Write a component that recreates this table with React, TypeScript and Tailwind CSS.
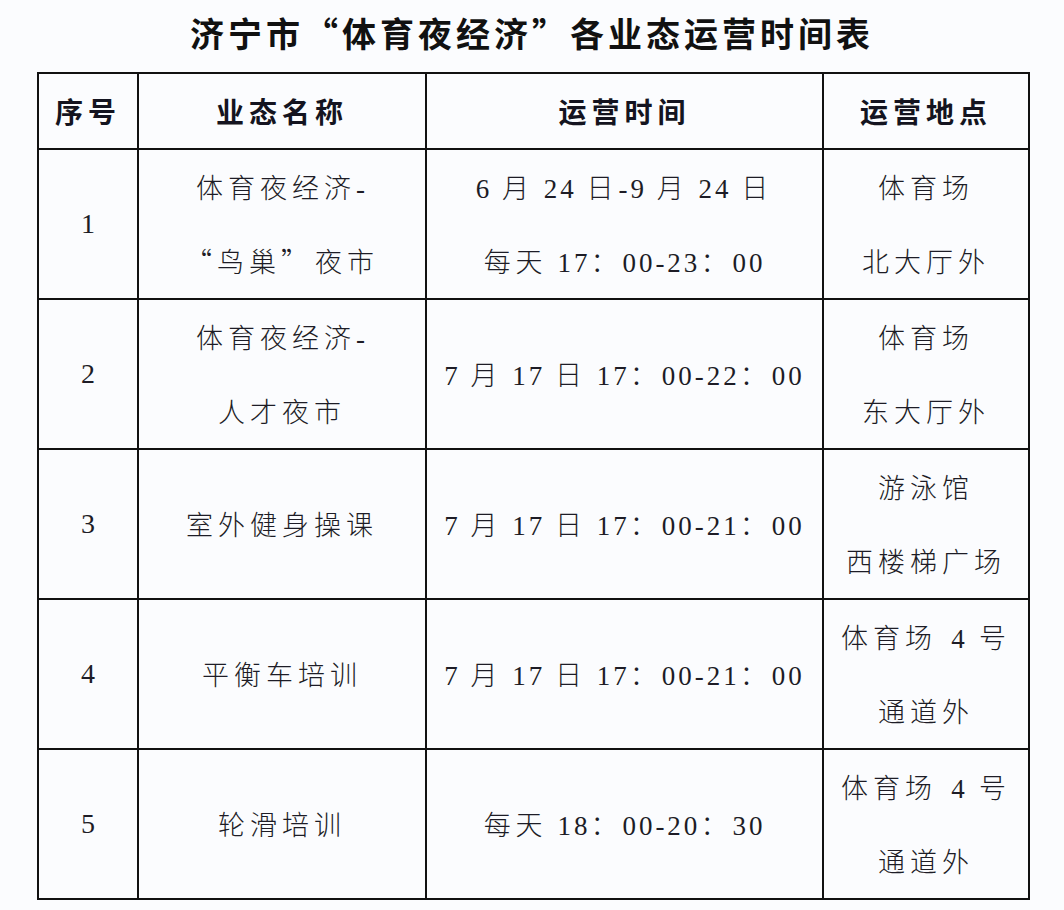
import React from 'react';

type Row = {
  no: string;
  name: string[];
  time: string[];
  place: string[];
};

const rows: Row[] = [
  { no: '1', name: ['体育夜经济-', '“鸟巢”夜市'], time: ['6 月 24 日-9 月 24 日', '每天 17：00-23：00'], place: ['体育场', '北大厅外'] },
  { no: '2', name: ['体育夜经济-', '人才夜市'], time: ['7 月 17 日 17：00-22：00'], place: ['体育场', '东大厅外'] },
  { no: '3', name: ['室外健身操课'], time: ['7 月 17 日 17：00-21：00'], place: ['游泳馆', '西楼梯广场'] },
  { no: '4', name: ['平衡车培训'], time: ['7 月 17 日 17：00-21：00'], place: ['体育场4号', '通道外'] },
  { no: '5', name: ['轮滑培训'], time: ['每天 18：00-20：30'], place: ['体育场4号', '通道外'] },
];

// Word-style mixed text: CJK on a wide grid, digits in a Times-like serif
function Mixed({ s }: { s: string }) {
  const parts = s.split(/([0-9\- ]+|[“”])/);
  return (
    <>
      {parts.map((p, i) => {
        if (!p) return null;
        if (p === '“') return <span key={i} className="inline-block w-[32px] text-right">{p}</span>;
        if (p === '”') return <span key={i} className="inline-block w-[34px] text-left">{p}</span>;
        if (i % 2 === 1) {
          if (/^\d$/.test(p) && i > 0 && i < parts.length - 1 && parts[i - 1] && parts[i + 1]) {
            return (
              <span key={i} className="inline-block w-[42px] text-center font-['Liberation_Serif'] tracking-normal">
                {p}
              </span>
            );
          }
          return (
            <span key={i} className="font-['Liberation_Serif'] tracking-[3px] whitespace-pre">
              {p}
            </span>
          );
        }
        return <span key={i}>{p}</span>;
      })}
    </>
  );
}

function Lines({ items }: { items: string[] }) {
  return (
    <div className="flex flex-col">
      {items.map((t) => (
        <div key={t} className="h-[74px] leading-[74px] whitespace-nowrap">
          <Mixed s={t} />
        </div>
      ))}
    </div>
  );
}

export default function App() {
  const cjk = "font-['Noto_Sans_CJK_SC',sans-serif]";
  return (
    <div className={`w-[1064px] h-[910px] bg-[#fbfcfe] ${cjk} text-[#1d1c26]`}>
      <div className="h-[72px] flex items-center justify-center pb-[6px]">
        <h1 className="text-[34px] font-bold tracking-[4px] text-[#111] leading-none">
          济宁市<span className="inline-block w-[38px] text-right">“</span>体育夜经济<span className="inline-block w-[38px] text-left">”</span>各业态运营时间表
        </h1>
      </div>
      <table className="ml-[37px] w-[993px] table-fixed border-collapse border-2 border-[#111]">
        <colgroup>
          <col className="w-[100px]" />
          <col className="w-[288px]" />
          <col className="w-[397px]" />
          <col className="w-[206px]" />
        </colgroup>
        <thead>
          <tr className="h-[76px]">
            {['序号', '业态名称', '运营时间', '运营地点'].map((h) => (
              <th key={h} className="border-2 border-[#111] text-center align-middle text-[28px] font-bold tracking-[5px] text-[#141420]">
                {h}
              </th>
            ))}
          </tr>
        </thead>
        <tbody>
          {rows.map((r) => (
            <tr key={r.no} className="h-[148px]">
              <td className="border-2 border-[#111] text-center align-middle font-['Liberation_Serif'] text-[28px]">{r.no}</td>
              <td className="border-2 border-[#111] text-center align-middle text-[27px] font-light tracking-[5px]">
                <Lines items={r.name} />
              </td>
              <td className="border-2 border-[#111] text-center align-middle text-[27px] font-light tracking-[5px]">
                <Lines items={r.time} />
              </td>
              <td className="border-2 border-[#111] text-center align-middle text-[27px] font-light tracking-[5px]">
                <Lines items={r.place} />
              </td>
            </tr>
          ))}
        </tbody>
      </table>
    </div>
  );
}
